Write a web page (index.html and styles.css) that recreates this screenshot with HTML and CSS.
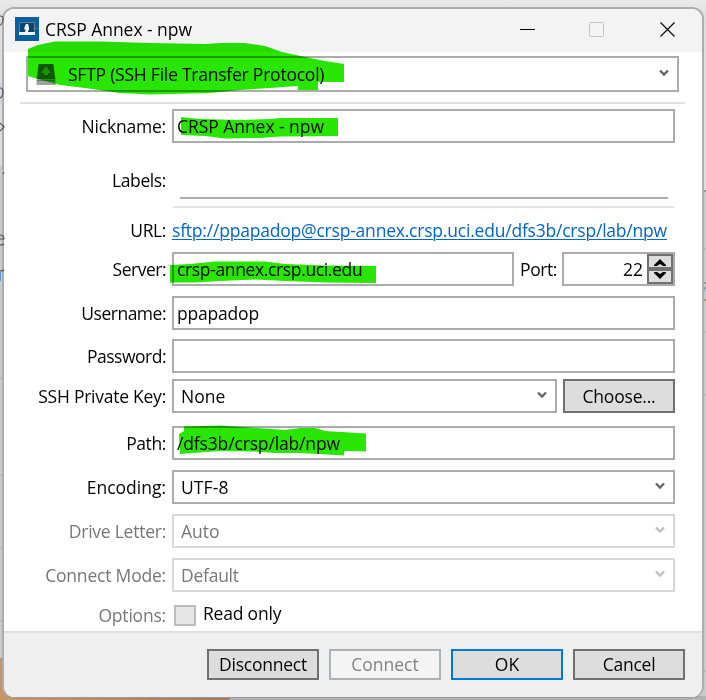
FILE: index.html
```
<!DOCTYPE html>
<html lang="en">
<head>
<meta charset="utf-8">
<title>CRSP Annex - npw</title>
<link rel="stylesheet" href="styles.css">
</head>
<body>
<div class="desktop">
  <svg class="backdrop" width="706" height="700" viewBox="0 0 706 700">
    <defs>
      <linearGradient id="top" x2="0" y2="1"><stop stop-color="#eaeaea"/><stop offset="1" stop-color="#d9d9d9"/></linearGradient>
      <linearGradient id="wood" x2="1" y2="0"><stop stop-color="#c69468"/><stop offset="1" stop-color="#a77958"/></linearGradient>
    </defs>
    <rect width="706" height="700" fill="#c9caca"/>
    <rect width="706" height="25" fill="url(#top)"/>
    <rect y="25" width="4" height="140" fill="#dedede"/>
    <rect y="82" width="4" height="22" fill="#d3d3e5"/>
    <rect x="702" y="25" width="4" height="166" fill="#dedede"/>
    <path d="M702 191h4M702 283h4M702 300h4" stroke="#999" stroke-width="2"/>
    <path d="M702 249h4M702 332h4M702 395h4M702 671h4M0 378h4M0 475h4M0 548h4M0 621h4" stroke="#aaa"/>
    <path d="M703 294q0-5 3-7" stroke="#6fa5d0" stroke-width="1.5" fill="none"/>
    <rect y="658" width="230" height="42" fill="url(#wood)"/>
    <rect x="230" y="696" width="476" height="4" fill="#b2b2b2"/>
  </svg>
  <main class="window">
    <header class="titlebar">
      <svg class="app-icon" width="24" height="24" viewBox="0 0 24 24">
        <rect width="24" height="24" fill="#0b5f9e"/>
        <rect x="4" y="5" width="16" height="10" fill="#08456f"/>
        <path d="M4.500 15V5.500H19.500V15" fill="none" stroke="#6a7c88"/>
        <path d="M4 15h6v-1l1-1-2-1 1-3 1-2h2l1 3v3l-1 1v1h7v3H4z" fill="#eef8fc"/>
        <path d="M20 11.500h4" stroke="#4997c3" stroke-dasharray="1 1"/>
      </svg>
      <span class="title t-title">CRSP Annex - npw</span>
      <svg class="caption" width="160" height="20" viewBox="0 0 160 20" fill="none">
        <path d="M2 10.500h15" stroke="#000"/>
        <rect x="71.500" y="3.500" width="14" height="14" rx="1" stroke="#c4c4c4"/>
        <path d="M142.500 3.500l14 14M156.500 3.500l-14 14" stroke="#111" stroke-width="1.300"/>
      </svg>
    </header>
    <section class="content">
      <div class="box combo protocol">
        <svg width="22" height="24" viewBox="0 0 22 24"><path d="M3.500 2h15l2 15v6h-19v-6z" fill="#a2a2a2"/><path d="M4 2h14l2 15H2z" fill="#5f5f5f"/><path d="M11 4l-5 7h3v2h4v-2h3z" fill="#a5a5a5"/><path d="M2 18.500h18" stroke="#777"/></svg>
        <span class="t-protocol">SFTP (SSH File Transfer Protocol)</span>
        <svg class="chevron" width="10" height="8" viewBox="0 0 10 8"><path d="M1 1.500l4 4 4-4"/></svg>
      </div>
      <div class="separator"></div>
      <div class="row"><label class="t-nick">Nickname:</label><div class="box"><span class="t-nickval">CRSP Annex - npw</span></div></div>
      <div class="row labels"><label class="t-labels">Labels:</label><div class="labels-field"><div class="labels-line"></div></div></div>
      <div class="row url"><label class="t-url">URL:</label><a class="t-link">sftp://ppapadop@crsp-annex.crsp.uci.edu/dfs3b/crsp/lab/npw</a></div>
      <div class="row server"><label class="t-server">Server:</label>
        <div class="group"><div class="box host"><span class="t-host">crsp-annex.crsp.uci.edu</span></div><span class="port-label t-port">Port:</span>
          <div class="box port"><span class="t-num">22</span><div class="spinner">
            <svg width="12" height="7" viewBox="0 0 12 7"><path d="M0 6L6 0l6 6v1H9L6 5 3 7H0z"/></svg>
            <svg width="12" height="7" viewBox="0 0 12 7"><path d="M0 1l6 6 6-6V0H9L6 2 3 0H0z"/></svg>
          </div></div></div></div>
      <div class="row user"><label class="t-user">Username:</label><div class="box"><span class="t-userval">ppapadop</span></div></div>
      <div class="row pass"><label class="t-pass">Password:</label><div class="box"></div></div>
      <div class="row key"><label class="t-key">SSH Private Key:</label>
        <div class="group"><div class="box combo keybox"><span class="t-none">None</span><svg class="chevron" width="10" height="8" viewBox="0 0 10 8"><path d="M1 1.500l4 4 4-4"/></svg></div><div class="button choose"><span class="t-choose">Choose...</span></div></div></div>
      <div class="row path"><label class="t-path">Path:</label><div class="box"><span class="t-pathval">/dfs3b/crsp/lab/npw</span></div></div>
      <div class="row user"><label class="t-enc">Encoding:</label><div class="box combo"><span class="t-utf">UTF-8</span><svg class="chevron" width="10" height="8" viewBox="0 0 10 8"><path d="M1 1.500l4 4 4-4"/></svg></div></div>
      <div class="row user disabled"><label class="t-drive">Drive Letter:</label><div class="box combo"><span class="t-auto">Auto</span><svg class="chevron" width="10" height="8" viewBox="0 0 10 8"><path d="M1 1.500l4 4 4-4"/></svg></div></div>
      <div class="row user disabled"><label class="t-mode">Connect Mode:</label><div class="box combo"><span class="t-default">Default</span><svg class="chevron" width="10" height="8" viewBox="0 0 10 8"><path d="M1 1.500l4 4 4-4"/></svg></div></div>
      <div class="row options disabled"><label class="t-options">Options:</label><div class="group"><i class="check"></i><span class="check-label t-read">Read only</span></div></div>
    </section>
    <footer class="footer">
      <div class="button"><span class="t-disc">Disconnect</span></div>
      <div class="button off"><span class="t-conn">Connect</span></div>
      <div class="button primary"><span class="t-ok">OK</span></div>
      <div class="button"><span class="t-cancel">Cancel</span></div>
    </footer>
  </main>
  <svg class="edges" width="706" height="700" viewBox="0 0 706 700" fill="none">
    <path d="M0 16q4 0 3 4-1 5-3 5M0 88q3 0 3 4 0 5-3 6M0 123l4 4-4 4M3 174l1-2M0 235q4 0 4 4H0M0 245q3 0 4-1M0 271q3 0 4-1" stroke="#555" stroke-width="1.200"/>
    <path d="M0 272v9" stroke="#5a9bd5" stroke-width="2"/>
  </svg>
  <svg class="marker" width="706" height="700" viewBox="0 0 706 700">
    <path d="M28 49L38 45 55 41.500 100 41.500 150 43 205 44 222 43 245 43 265 46 282 52 310 58 325 61 344 64V82H318V90H298V86L270 88 240 90 210 93 150 94.500 120 93 85 88 60 85 45 81 28 76z"/>
    <path d="M181 117L200 119 240 120 270 119 280 118H338V136L280 136.500 260 138 225 138.500 205 136 181 135z"/>
    <path d="M170 265L190 264 215 261.500 265 261.500 285 264 325 265.500 376 266V283L325 282.500 285 281 255 279.500 220 281 195 282.500H170z"/>
    <path d="M179 434L184 431V426.500L220 425.500 250 427.500 285 430 300 428 315 428 325 431 366 433.500V451.500L344 451V455.500L300 453 275 453 255 451.500 220 451 180 454z"/>
  </svg>
</div>
</body>
</html>
```
FILE: styles.css
```
* { box-sizing: border-box; }
body { margin: 0; font: 17.5px/24px "Open Sans", "Noto Sans", sans-serif; color: #050505; }
.desktop { position: relative; width: 706px; height: 700px; padding: 7px 2px 2px; overflow: hidden; isolation: isolate; }
.backdrop, .marker, .edges { position: absolute; left: 0; top: 0; }
.backdrop { z-index: -1; }
.marker { mix-blend-mode: multiply; fill: #28e600; pointer-events: none; }
.window { width: 702px; height: 691px; border: 2px solid #adadad; border-bottom: 1px solid #999; border-radius: 12px; overflow: hidden; background: #fff; display: flex; flex-direction: column; }
span, a, label { white-space: nowrap; }
.titlebar { height: 43px; flex: none; background: #f2f3f2; display: flex; align-items: center; padding: 0 24px 3px 11px; }
.title { margin-left: 6px; }
.caption { margin-left: auto; }
.content { height: 579px; flex: none; padding: 4px 0 0; }
.box { height: 34px; border: 2px solid #abaaaf; background: #fff; display: flex; align-items: center; padding: 0 3px; min-width: 0; }
.combo { padding: 0 8px 0 7px; border-color: #acacac; }
.combo > span { margin-top: -1px; }
.chevron { margin: 0 0 2px auto; fill: none; stroke: #666; stroke-width: 2.4; }
.protocol { height: 36px; width: 653px; margin-left: 22px; }
.protocol > span { margin: 0 0 0 11px; }
.protocol .chevron { margin-bottom: 2px; }
.separator { width: 665px; height: 2px; margin: 10px 0 5px 16px; background: #e1e1e1; }
.row { display: grid; grid-template-columns: 162px 503px; column-gap: 6px; height: 34px; align-items: center; }
.row > label { justify-self: end; }
.row.labels { height: 65px; align-items: start; }
.row.labels > label { padding-top: 25px; }
.labels-field { height: 65px; border: 2px solid transparent; border-top: 0; border-bottom-color: #e4e4e4; padding: 54px 5px 0 6px; }
.labels-line { height: 2px; background: #acacb1; }
.row.url { height: 44px; }
.url > a { justify-self: start; color: #0066cc; text-decoration: underline; text-underline-offset: 2px; text-decoration-thickness: 1px; }
.group { display: flex; align-items: center; }
.host { width: 342px; }
.port-label { width: 42px; margin-left: 6px; }
.box.port { width: 113px; padding: 0; justify-content: flex-end; }
.spinner { width: 26px; height: 30px; margin-left: 4px; border: 2px solid #707070; display: grid; grid-template-rows: 13px 13px; place-items: center; background: linear-gradient(#ddd 11px, #707070 11px 15px, #ddd 15px); }
.row.user { margin-top: 10px; }
.row.pass { margin-top: 9px; }
.row.key { margin-top: 6px; }
.row.path { margin-top: 13px; }
.keybox { width: 385px; }
.button { width: 112px; height: 31px; border: 2px solid #707070; background: #ddd; display: flex; align-items: center; justify-content: center; }
.button > span { margin-top: -1px; }
.choose { height: 34px; margin-left: 6px; }
.choose > span { margin-top: 0; }
.disabled { color: #777; }
.disabled .box { border-color: #d9d9d9; }
.disabled .chevron { stroke: #bfbfbf; }
.row.options { margin-top: 6px; }
.check { width: 22px; height: 21px; margin-left: 2px; border: 2px solid #bcbcbc; background: #e6e6e6; }
.check-label { margin: -5px 0 0 7px; color: #050505; }
.footer { flex: 1; border-top: 2px solid #e0e0e0; background: #efefef; display: flex; gap: 10px; justify-content: flex-end; padding: 16px 17px 0 0; }
.off { background: #f4f4f4; border-color: #adb2b5; color: #838383; }
.primary { border-color: #0078d7; }

.t-title, .t-nickval { letter-spacing: -0.05px; }
.t-protocol { letter-spacing: -0.23px; }
.t-nick, .t-mode, .t-options, .t-read, .t-choose, .t-userval { letter-spacing: -0.2px; }
.t-labels, .t-url, .t-path, .t-port { letter-spacing: -0.4px; }
.t-link { letter-spacing: -0.21px; }
.t-server, .t-user, .t-pass { letter-spacing: -0.5px; }
.t-host { letter-spacing: -0.36px; }
.t-key, .t-drive, .t-default, .t-disc, .t-cancel { letter-spacing: -0.25px; }
.t-pathval { letter-spacing: -0.15px; }
.t-utf { letter-spacing: 0.1px; }
```
